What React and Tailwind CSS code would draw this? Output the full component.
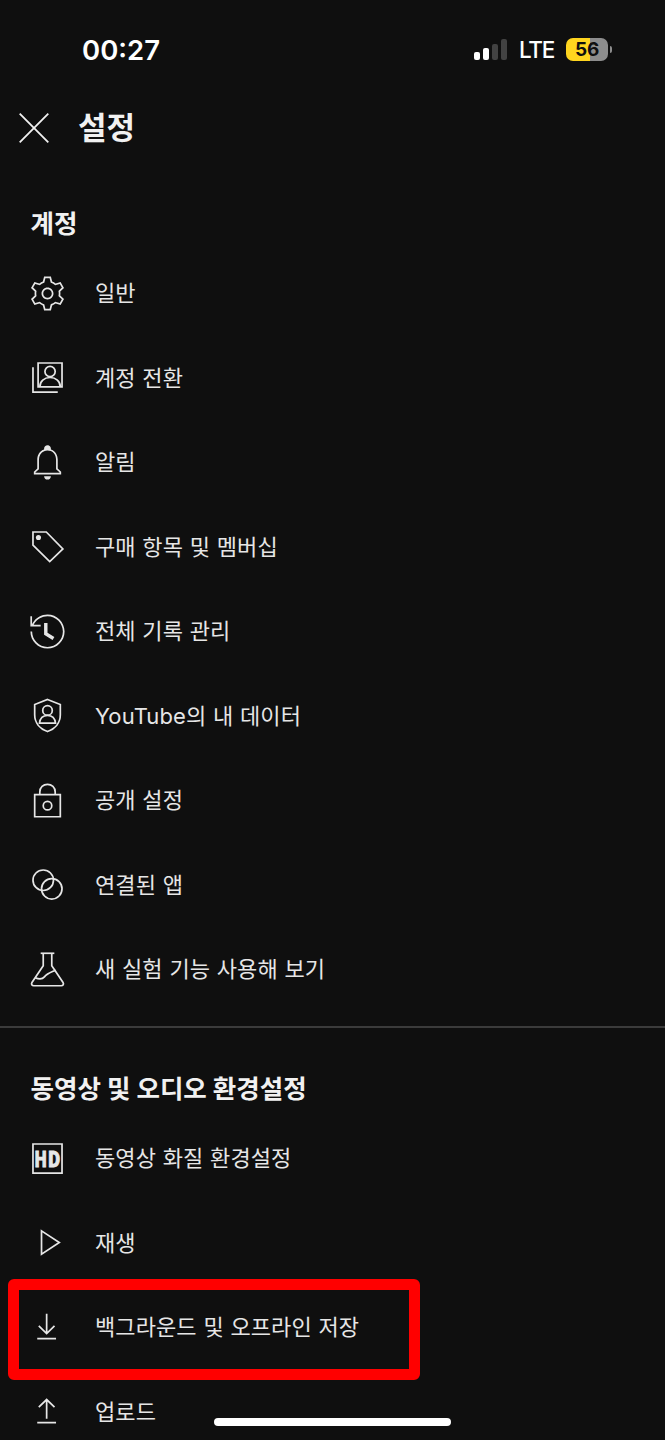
import React from 'react';

// --- Icons (24 unit grid) ---
const Icon = ({ children }) => (
  <svg
    viewBox="0 0 24 24"
    className="w-[41px] h-[41px] shrink-0"
    fill="none"
    stroke="currentColor"
    strokeWidth="1"
  >
    {children}
  </svg>
);

const GearIcon = () => (
  <Icon>
    <path
      fill="currentColor"
      stroke="none"
      d="M12 9.5c1.38 0 2.5 1.12 2.5 2.5s-1.12 2.5-2.5 2.5-2.5-1.12-2.5-2.5 1.12-2.5 2.5-2.5m0-1c-1.93 0-3.5 1.57-3.5 3.5s1.57 3.5 3.5 3.5 3.5-1.57 3.5-3.5-1.57-3.5-3.5-3.5zM13.22 3l.55 2.2.13.51.5.18c.61.23 1.19.56 1.72.98l.4.32.5-.14 2.17-.62 1.22 2.11-1.63 1.59-.37.36.08.51c.05.32.08.64.08.98s-.03.66-.08.98l-.08.51.37.36 1.63 1.59-1.22 2.11-2.17-.62-.5-.14-.4.32c-.53.43-1.11.76-1.72.98l-.5.18-.13.51-.55 2.24h-2.44l-.55-2.2-.13-.51-.5-.18c-.6-.23-1.18-.56-1.72-.99l-.4-.32-.5.14-2.17.62-1.21-2.12 1.63-1.59.37-.36-.08-.51c-.05-.32-.08-.65-.08-.98s.03-.66.08-.98l.08-.51-.37-.36L3.6 8.56l1.22-2.11 2.17.62.5.14.4-.32c.53-.44 1.11-.77 1.72-.99l.5-.18.13-.51.54-2.21h2.44M14 2h-4l-.74 2.96c-.73.27-1.4.66-2 1.14l-2.92-.83-2 3.46 2.19 2.13c-.06.37-.09.75-.09 1.14s.03.77.09 1.14l-2.19 2.13 2 3.46 2.92-.83c.6.48 1.27.87 2 1.14L10 22h4l.74-2.96c.73-.27 1.4-.66 2-1.14l2.92.83 2-3.46-2.19-2.13c.06-.37.09-.75.09-1.14s-.03-.77-.09-1.14l2.19-2.13-2-3.46-2.92.83c-.6-.48-1.27-.87-2-1.14L14 2z"
    />
  </Icon>
);

const SwitchAccountIcon = () => (
  <Icon>
    <path d="M6.5 3.5h14v14h-14z" />
    <path d="M3.5 6v14.5H18" />
    <circle cx="13.5" cy="8.5" r="3" />
    <path d="M7.5 17.5c0-3.4 2.6-5.5 6-5.5s6 2.1 6 5.5" />
  </Icon>
);

const BellIcon = () => (
  <Icon>
    <path
      fill="currentColor"
      stroke="none"
      d="M10 20h4c0 1.1-.9 2-2 2s-2-.9-2-2zm10-2.65V19H4v-1.65l2-1.88v-5.15C6 7.4 7.56 5.1 10 4.34v-.38c0-1.42 1.49-2.5 2.99-1.76.65.32 1.01 1.03 1.01 1.76v.39c2.44.75 4 3.06 4 5.98v5.15l2 1.87zm-1 .42-2-1.88v-5.47c0-2.47-1.19-4.36-3.13-5.1-1.26-.53-2.64-.5-3.84.03C8.15 6.11 7 7.99 7 10.42v5.47l-2 1.88V18h14v-.23z"
    />
  </Icon>
);

const TagIcon = () => (
  <Icon>
    <path d="M3.5 3.5h7.8l9.7 9.9-7.7 7.4-9.8-9.6z" />
    <circle cx="6.7" cy="6.7" r="1.5" fill="currentColor" stroke="none" />
  </Icon>
);

const HistoryIcon = () => (
  <Icon>
    <path
      fill="currentColor"
      stroke="none"
      d="M14.97 16.95 10 13.87V7h2v5.76l4.03 2.49-1.06 1.7zM22 12c0 5.51-4.49 10-10 10S2 17.51 2 12h1c0 4.96 4.04 9 9 9s9-4.04 9-9-4.04-9-9-9C8.81 3 5.92 4.64 4.28 7.38c-.11.18-.22.37-.31.56L3.94 8H8v1H1.96V3h1v4.74c.04-.09.07-.17.11-.25.11-.22.23-.42.35-.63C5.22 3.86 8.51 2 12 2c5.51 0 10 4.49 10 10z"
    />
  </Icon>
);

const ShieldIcon = () => (
  <Icon>
    <path d="M12 2.6l7.5 3v6c0 4.6-3 8.2-7.5 9.8-4.5-1.6-7.5-5.2-7.5-9.8v-6z" />
    <circle cx="12" cy="9" r="2.8" />
    <path d="M7.3 16.5c.3-2.8 2-4.5 4.7-4.5s4.4 1.7 4.7 4.5z" />
  </Icon>
);

const LockIcon = () => (
  <Icon>
    <path d="M4.5 8.5h15v13h-15z" />
    <path d="M7.5 8.5V7c0-2.6 2-4.5 4.5-4.5s4.5 1.9 4.5 4.5v1.5" />
    <circle cx="12" cy="15" r="2.5" />
  </Icon>
);

const LinkedIcon = () => (
  <Icon>
    <circle cx="9.5" cy="9.5" r="6" />
    <circle cx="14.5" cy="14.5" r="6" />
  </Icon>
);

const FlaskIcon = () => (
  <Icon>
    <path d="M8 2.5h8" />
    <path d="M9.5 2.5v7.3L2.9 19.6c-.6 1 0 1.9 1.1 1.9h16c1.1 0 1.7-.9 1.1-1.9L14.5 9.8V2.5" />
    <path d="M4.9 16.9c2.4 1 4.1.9 5.3-.6 1.5-1.9 2.7-2.2 6.6-3.9" />
  </Icon>
);

const HdIcon = () => (
  <Icon>
    <path d="M3.5 3.5h17v17h-17z" />
    <g fill="currentColor" strokeWidth=".5" fontFamily="Roboto" fontWeight="900" fontSize="13">
      <text transform="translate(4.5 16.7) scale(.76 1)">H</text>
      <text transform="translate(12.4 16.7) scale(.82 1)">D</text>
    </g>
  </Icon>
);

const PlayIcon = () => (
  <Icon>
    <path d="M8.5 5.2 18.9 12 8.5 18.8z" />
  </Icon>
);

const DownloadIcon = () => (
  <Icon>
    <path d="M6 18.5h11M11.5 4v11.6M6.9 11l4.6 4.6 4.6-4.6" />
  </Icon>
);

const UploadIcon = () => (
  <Icon>
    <path d="M6 18.5h11M11.5 16.2V5M6.9 9.5l4.6-4.5 4.6 4.5" />
  </Icon>
);

const accountItems = [
  { label: '일반', icon: GearIcon },
  { label: '계정 전환', icon: SwitchAccountIcon },
  { label: '알림', icon: BellIcon },
  { label: '구매 항목 및 멤버십', icon: TagIcon },
  { label: '전체 기록 관리', icon: HistoryIcon },
  { label: 'YouTube의 내 데이터', icon: ShieldIcon },
  { label: '공개 설정', icon: LockIcon },
  { label: '연결된 앱', icon: LinkedIcon },
  { label: '새 실험 기능 사용해 보기', icon: FlaskIcon },
];

const videoItems = [
  { label: '동영상 화질 환경설정', icon: HdIcon },
  { label: '재생', icon: PlayIcon },
  { label: '백그라운드 및 오프라인 저장', icon: DownloadIcon, highlighted: true },
  { label: '업로드', icon: UploadIcon },
];

const SettingRow = ({ item }) => {
  const ItemIcon = item.icon;
  return (
    <li className="relative flex h-[84.5px] items-center gap-[27px] pl-[27px] text-[#e6e6e6]">
      <ItemIcon />
      <span className="text-[22px] leading-[32px] tracking-[0.1px] [word-spacing:0.4px] whitespace-nowrap">
        {item.label}
      </span>
      {item.highlighted && (
        <div className="absolute left-2 top-[-6px] w-[412px] h-[101px] rounded-[6px] border-[11px] border-[#ff0000]" />
      )}
    </li>
  );
};

const SectionTitle = ({ children }) => (
  <h2 className="h-[49px] pl-[30.5px] text-[25.5px] font-bold leading-[44px] text-[#f1f1f1]">{children}</h2>
);

const StatusBar = () => (
  <div className="flex h-[100px] shrink-0 items-center justify-between pl-[82px] pr-[53px] text-white">
    <span className="pt-px text-[27.5px] font-semibold leading-none">00:27</span>
    <div className="flex items-center pb-px">
      <div className="flex h-[21px] items-end gap-[3px]">
        <div className="w-[6px] h-[8px] rounded-[2px] bg-white" />
        <div className="w-[6px] h-[12px] rounded-[2px] bg-white" />
        <div className="w-[6px] h-[16px] rounded-[2px] bg-[#424242]" />
        <div className="w-[6px] h-[21px] rounded-[2px] bg-[#424242]" />
      </div>
      <span className="ml-[12px] w-[47px] pt-0.5 text-[22.5px] font-medium leading-none tracking-[-1.3px]">LTE</span>
      <div className="flex h-[23px] w-[42px] items-center justify-center rounded-[7px] bg-linear-to-r from-[#ffd51f] from-[57%] to-[#8d8d8d] to-[57%] text-[19px] font-bold leading-none tracking-[-0.3px] text-[#0f0f0f]">
        56
      </div>
      <div className="ml-[2px] h-[7px] w-[2px] rounded-r-full bg-[#8d8d8d]" />
    </div>
  </div>
);

export default function App() {
  return (
    <div className="relative flex h-[1440px] w-[665px] flex-col overflow-hidden bg-[#0f0f0f] font-['Inter','Noto_Sans_CJK_KR',sans-serif]">
      <StatusBar />

      <header className="flex h-14 shrink-0 items-center gap-[29px] pl-[19px] text-[#f1f1f1]">
        <svg viewBox="0 0 30 30" className="h-[30px] w-[30px]" stroke="currentColor" strokeWidth="1.8">
          <path d="M.7.7l28.6 28.6M29.3.7.7 29.3" />
        </svg>
        <h1 className="pb-0.5 text-[31px] font-bold leading-none">설정</h1>
      </header>

      <section className="h-[872px] shrink-0 border-b-2 border-[#3b3b3b] pt-[46px]">
        <SectionTitle>계정</SectionTitle>
        <ul>
          {accountItems.map((item) => (
            <SettingRow key={item.label} item={item} />
          ))}
        </ul>
      </section>

      <section className="shrink-0 pt-[39px]">
        <SectionTitle>동영상 및 오디오 환경설정</SectionTitle>
        <ul>
          {videoItems.map((item) => (
            <SettingRow key={item.label} item={item} />
          ))}
        </ul>
      </section>

      {/* Home indicator */}
      <div className="absolute bottom-[14px] left-[214px] h-2 w-[237px] rounded-full bg-white" />
    </div>
  );
}
